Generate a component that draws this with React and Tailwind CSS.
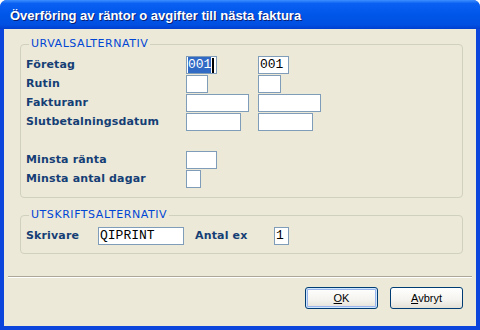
import React from "react";

const label = "font-['DejaVu_Sans',sans-serif] text-[11px] font-bold tracking-[0.15px] text-[#153e75] leading-[18px] whitespace-nowrap";
const mono = "font-['Liberation_Mono',monospace] text-[13px] leading-[16px] text-black";

function Field({ w, value, selected }) {
  return (
    <div className={`h-[18px] ${w} flex items-center border border-[#7f9db9] bg-white pl-[1px] ${mono}`}>
      {selected ? (
        <>
          <span className="bg-[#316ac5] text-white">{value}</span>
          <span className="ml-[1px] h-[15px] w-[2px] bg-black" />
        </>
      ) : (
        value
      )}
    </div>
  );
}

function Group({ title, className, children }) {
  return (
    <div className={`relative rounded-[4px] border border-[#d0d0bf] ${className}`}>
      <span className="absolute -top-[8px] left-[8px] bg-[#ece9d8] px-[2px] font-['DejaVu_Sans',sans-serif] text-[11px] leading-[13px] tracking-[0.55px] text-[#0046d5]">
        {title}
      </span>
      {children}
    </div>
  );
}

function Button({ children, isDefault }) {
  return (
    <button
      className={`h-[22px] w-[73px] rounded-[3px] border border-[#003c74] bg-[linear-gradient(to_bottom,#ffffff_0%,#f4f3ee_60%,#e3e0d6_100%)] font-['Liberation_Sans',sans-serif] text-[11px] text-black ${
        isDefault ? "shadow-[inset_0_0_0_1px_#cee7ff,inset_0_0_0_2px_#98b4eb]" : ""
      }`}
    >
      {children}
    </button>
  );
}

export default function App() {
  return (
    <div className="flex h-[330px] w-[480px] flex-col overflow-hidden rounded-t-[7px] bg-[#0b45dc]">
      <div className="flex h-[29px] shrink-0 items-center bg-[linear-gradient(to_bottom,#3d8fff_0%,#0a60f2_12%,#0056e8_50%,#0050e2_85%,#003fcf_100%)] pl-[10px] pt-[3px]">
        <span className="font-['Liberation_Sans',sans-serif] text-[13px] font-bold text-white [text-shadow:1px_1px_#0a1f73]">
          Överföring av räntor o avgifter till nästa faktura
        </span>
      </div>
      <div className="mx-[4px] mb-[4px] flex flex-1 flex-col bg-[#ece9d8]">
        <Group title="URVALSALTERNATIV" className="ml-[16px] mr-[13px] mt-[15px] h-[154px] pl-[5px] pt-[11px]">
          <div className="grid grid-cols-[160px_72px_1fr] gap-y-[1px]">
            <span className={label}>Företag</span>
            <Field w="w-[31px]" value="001" selected />
            <Field w="w-[31px]" value="001" />
            <span className={label}>Rutin</span>
            <Field w="w-[22px]" value="" />
            <Field w="w-[23px]" value="" />
            <span className={label}>Fakturanr</span>
            <Field w="w-[63px]" value="" />
            <Field w="w-[63px]" value="" />
            <span className={label}>Slutbetalningsdatum</span>
            <Field w="w-[55px]" value="" />
            <Field w="w-[55px]" value="" />
          </div>
          <div className="mt-[20px] grid grid-cols-[160px_1fr] gap-y-[1px]">
            <span className={label}>Minsta ränta</span>
            <Field w="w-[31px]" value="" />
            <span className={label}>Minsta antal dagar</span>
            <Field w="w-[15px]" value="" />
          </div>
        </Group>
        <Group title="UTSKRIFTSALTERNATIV" className="ml-[16px] mr-[13px] mt-[17px] h-[39px] pl-[5px] pt-[11px]">
          <div className="flex items-center">
            <span className={`${label} w-[72px]`}>Skrivare</span>
            <Field w="w-[86px]" value="QIPRINT" />
            <span className={`${label} ml-[11px] w-[79px]`}>Antal ex</span>
            <Field w="w-[15px]" value="1" />
          </div>
        </Group>
        <div className="mx-[4px] mt-[22px] h-[2px] border-t border-b border-t-[#aca899] border-b-white" />
        <div className="mr-[13px] mt-[9px] flex justify-end gap-[12px]">
          <Button isDefault>
            <span className="underline">O</span>K
          </Button>
          <Button>
            <span className="underline">A</span>vbryt
          </Button>
        </div>
      </div>
    </div>
  );
}
